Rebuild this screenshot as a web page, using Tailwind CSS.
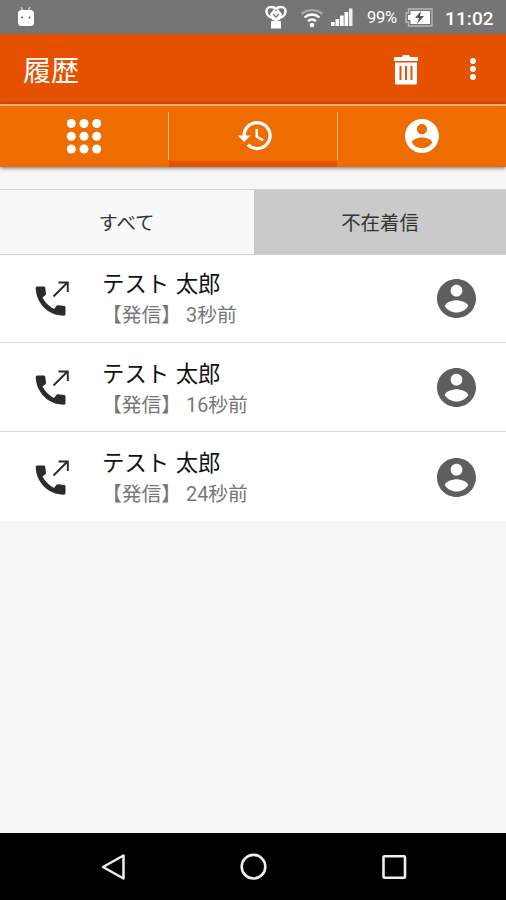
<!DOCTYPE html>
<html lang="ja">
<head>
<meta charset="utf-8">
<title>履歴</title>
<script src="https://cdn.jsdelivr.net/npm/@tailwindcss/browser@4"></script>
</head>
<body class="w-[506px] h-[900px] overflow-hidden bg-[#f7f7f7] font-[Roboto,'Noto_Sans_CJK_JP',sans-serif]">
<svg class="hidden">
  <symbol id="account" viewBox="2 2 20 20"><path d="M12 2C6.48 2 2 6.48 2 12s4.48 10 10 10 10-4.48 10-10S17.520 2 12 2zm0 3c1.660 0 3 1.340 3 3s-1.340 3-3 3-3-1.340-3-3 1.340-3 3-3zm0 14.200c-2.500 0-4.710-1.280-6-3.220.03-1.990 4-3.080 6-3.080 1.990 0 5.970 1.090 6 3.080-1.290 1.940-3.500 3.220-6 3.220z"/></symbol>
  <symbol id="outgoing" viewBox="0 0 36 36"><path d="M2 5.500h7q1 0 1.200 1l.8 6q.1 1-.6 1.700L7.500 16.500Q11 23.500 19 28l2.300-3q.7-.8 1.700-.7l6.500.8q1 .2 1 1.200V33q0 1.700-1.500 1.700C13 34.700 1 22 .7 7Q.7 5.500 2 5.500z"/><path d="M18.500 15.500 32.500 1.500M23.500 1.500h9.300V11" fill="none" stroke="currentColor" stroke-width="1.900"/></symbol>
</svg>
<div class="flex h-full flex-col">
  <header class="flex h-[34px] shrink-0 items-center bg-[#757575] text-white">
    <svg class="ml-[17px] h-[22px] w-[18px]" viewBox="0 0 18 22" fill="#fff"><path d="M4 1l2 4M13 1l-2 4" stroke="#ddd" stroke-width="1.300"/><rect x="1" y="4" width="16" height="16" rx="3.500"/><circle cx="5" cy="11.500" r="1" fill="#555"/><circle cx="12.500" cy="11.500" r="1" fill="#555"/></svg>
    <svg class="ml-[230px] h-[24px] w-[22px]" viewBox="0 0 22 24" fill="none" stroke="#fff" stroke-width="2.400"><path d="M11 4.500C9 1 1.500 1 1.500 6.500c0 3.500 3 5.500 5.500 6M11 4.500c2-3.500 9.500-3.500 9.500 2 0 3.500-3 5.500-5.500 6"/><path d="M5 9l4-5 2 2.500L13 4l4 5-2 6h-1.500L11 17l-2.500-2H7zM6 16h10v7.500H6z" fill="#fff" stroke="none"/><path d="M8 9l3 3 3-3" stroke="#757575" stroke-width="1.300"/></svg>
    <svg class="ml-[13px] mt-px h-[20px] w-[24px]" viewBox="0 0 24 20" fill="none" stroke="#fff" stroke-width="2.300"><path d="M1.500 6C7.500.8 16.500.8 22.500 6" stroke="#aaa"/><path d="M4.500 9.500c4.500-4 10.500-4 15 0M8 13.200c2.500-2.200 5.500-2.200 8 0"/><circle cx="12" cy="17" r="2.300" fill="#fff" stroke="none"/></svg>
    <svg class="ml-[7px] mt-px h-[19px] w-[22px]" viewBox="0 0 22 19" fill="#fff"><path d="M0 14h3.700v4H0zM4.500 11h3.700v7H4.500zM9 7.500h3.700V18H9zM13.500 4h3.700v14h-3.700z"/><path d="M18 .5h3.500V18H18z" fill="#eee"/></svg>
    <span class="ml-[14px] w-[32px] whitespace-nowrap pt-[3px] text-[16.500px] leading-none tracking-[-0.3px]">99%</span>
    <svg class="ml-[6px] h-[19px] w-[28px]" viewBox="0 0 28 19"><path d="M3.500 1H27v17H3.500v-4H1V5h2.500z" fill="none" stroke="#bbb" stroke-width="1.300"/><path d="M5.500 3H25v13H5.500v-4H3V7h2.500z" fill="#fff"/><path d="M16 3l-6 7h4l-2 6 7-8h-4z" fill="#555"/></svg>
    <span class="ml-[12px] whitespace-nowrap pt-[3px] text-[19px] font-medium leading-none tracking-[0.1px]">11:02</span>
  </header>
  <div class="flex h-[70px] shrink-0 items-center bg-[#e65100] pl-[23px] pr-[30px] text-white">
    <h1 class="flex-1 pt-[6px] text-[28px] leading-none">履歴</h1>
    <svg class="mt-[2px] h-[30px] w-[24px]" viewBox="0 0 24 30" fill="#fff"><path d="M0 2h8l1-2h6l1 2h8v4H0z"/><path fill-rule="evenodd" d="M1 7.500h22V28q0 1.500-1.500 1.500h-19Q1 29.500 1 28zM5.500 11v14h2V11zM11 11v14h2V11zM16.500 11v14h2V11z"/></svg>
    <svg class="ml-[52px] h-[24px] w-[6px]" viewBox="0 0 6 24" fill="#fff"><circle cx="3" cy="4" r="2.900"/><circle cx="3" cy="12" r="2.900"/><circle cx="3" cy="20" r="2.900"/></svg>
  </div>
  <nav class="relative grid h-[63px] shrink-0 grid-cols-3 border-t-2 border-[#f9ab7c] bg-[#ef6c00] text-white shadow-[0_1px_4px_rgba(0,0,0,.55)]">
    <div class="flex justify-center pt-[12px]">
      <svg class="h-[36px] w-[36px]" viewBox="0 0 36 36" fill="#fff"><circle cx="5.300" cy="5.500" r="4.500"/><circle cx="18" cy="5.500" r="4.500"/><circle cx="30.700" cy="5.500" r="4.500"/><circle cx="5.300" cy="18.200" r="4.500"/><circle cx="18" cy="18.200" r="4.500"/><circle cx="30.700" cy="18.200" r="4.500"/><circle cx="5.300" cy="31" r="4.500"/><circle cx="18" cy="31" r="4.500"/><circle cx="30.700" cy="31" r="4.500"/></svg>
    </div>
    <div class="flex flex-col border-b-[6px] border-[#e65100] pt-[6px]">
      <div class="-mx-px flex h-[48px] items-center justify-center border-x-[1.5px] border-[#fbc08d] pb-[2px] pl-[5px]">
        <svg class="h-[39px] w-[39px]" viewBox="0 0 24 24" fill="#fff"><path d="M13 3c-4.970 0-9 4.030-9 9H1l3.890 3.890.07.14L9 12H6c0-3.870 3.130-7 7-7s7 3.130 7 7-3.130 7-7 7c-1.930 0-3.680-.79-4.940-2.060l-1.420 1.420C8.270 19.990 10.510 21 13 21c4.970 0 9-4.030 9-9s-4.030-9-9-9zm-1 5v5l4.280 2.540.72-1.210-3.500-2.080V8H12z"/></svg>
      </div>
    </div>
    <div class="flex justify-center pt-[13px]"><svg class="h-[34px] w-[34px] fill-white"><use href="#account"/></svg></div>
  </nav>
  <div class="mt-[22px] grid h-[66px] shrink-0 grid-cols-2 border-y border-[#d2d2d2] text-[19.400px] leading-none text-[#333]">
    <div class="flex items-center justify-center bg-[#f8f8f8] pt-[4px]">すべて</div>
    <div class="ml-px flex items-center justify-center bg-[#cacaca] pt-[4px]">不在着信</div>
  </div>
  <ul class="h-[266px] shrink-0 divide-y-[1.500px] divide-[#dedede] bg-white">
    <li class="flex h-[88px] items-center pl-[35px] pr-[30px] text-[#2b2b2b]">
      <svg class="h-[36px] w-[36px] fill-[#2b2b2b]"><use href="#outgoing"/></svg>
      <div class="ml-[31px] flex-1 pt-[3px]"><p class="text-[22.400px] leading-[31px] text-[#111]">テスト <span class="ml-[1px]">太郎</span></p><p class="text-[19.800px] leading-[31px] text-[#777]">【発信】 3秒前</p></div>
      <svg class="h-[39px] w-[39px] fill-[#5e5e5e]"><use href="#account"/></svg>
    </li>
    <li class="flex h-[89px] items-center pl-[35px] pr-[30px] text-[#2b2b2b]">
      <svg class="mt-[2px] h-[36px] w-[36px] fill-[#2b2b2b]"><use href="#outgoing"/></svg>
      <div class="ml-[31px] flex-1 pt-[5px]"><p class="text-[22.400px] leading-[31px] text-[#111]">テスト <span class="ml-[1px]">太郎</span></p><p class="text-[19.800px] leading-[31px] text-[#777]">【発信】 16秒前</p></div>
      <svg class="mt-px h-[39px] w-[39px] fill-[#5e5e5e]"><use href="#account"/></svg>
    </li>
    <li class="flex h-[89px] items-center pl-[35px] pr-[30px] text-[#2b2b2b]">
      <svg class="mt-[2px] h-[36px] w-[36px] fill-[#2b2b2b]"><use href="#outgoing"/></svg>
      <div class="ml-[31px] flex-1 pt-[4px]"><p class="text-[22.400px] leading-[31px] text-[#111]">テスト <span class="ml-[1px]">太郎</span></p><p class="text-[19.800px] leading-[31px] text-[#777]">【発信】 24秒前</p></div>
      <svg class="mt-px h-[39px] w-[39px] fill-[#5e5e5e]"><use href="#account"/></svg>
    </li>
  </ul>
  <main class="flex-1"></main>
  <footer class="flex h-[67px] shrink-0 items-center justify-between bg-black px-[99px]">
    <svg class="h-[28px] w-[28px]" viewBox="0 0 28 28" fill="none" stroke="#eee" stroke-width="2.500" stroke-linejoin="round"><path d="M4 14 24.500 2.500v23z"/></svg>
    <svg class="h-[28px] w-[28px]" viewBox="0 0 28 28" fill="none" stroke="#eee" stroke-width="2.600"><circle cx="14.500" cy="13.700" r="11.800"/></svg>
    <svg class="h-[28px] w-[28px]" viewBox="0 0 28 28" fill="none" stroke="#eee" stroke-width="2.600"><rect x="4.500" y="3.200" width="21.500" height="21.500" rx="1"/></svg>
  </footer>
</div>
</body>
</html>
